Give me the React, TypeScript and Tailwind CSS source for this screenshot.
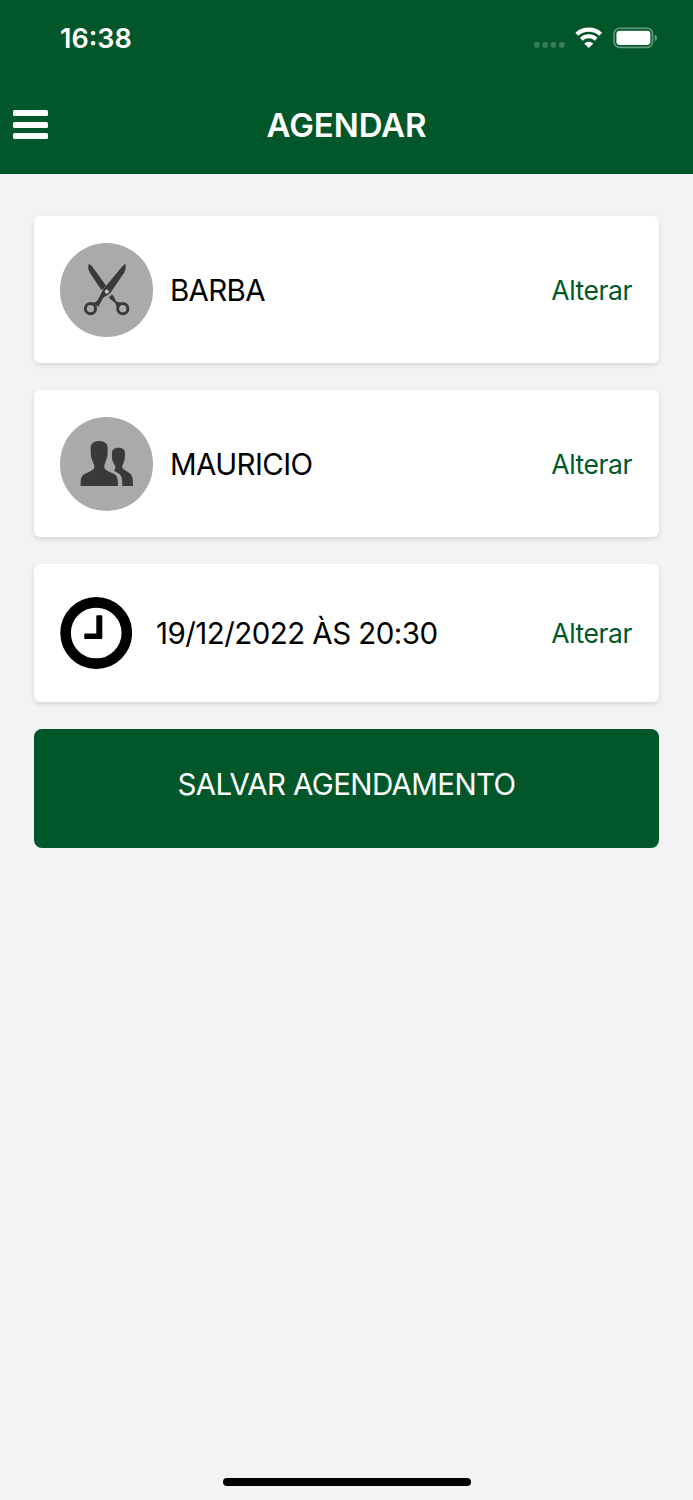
import React from 'react';

const ScissorsIcon = () => (
  <svg viewBox="0 0 93 94" className="h-full w-full" fill="#3a3a3a">
    <path d="M29 20.7C27.6 23.6 28 26.6 30 30L40 45Q41.4 47.4 43 46.2L46 42.6 32 23.2Z" />
    <path d="M65.2 20.8C66.2 23.6 65.8 26.4 64.2 29.4L51.4 48.4C49.8 51.8 44.6 52.4 42.8 55.6L38.2 64 33 59.6C36.2 59.2 37.4 57.8 38.6 55.2L43.8 45.6 62 23.8Z" />
    <path d="M48.7 54.5 51.9 51.4C54.8 53.2 54.8 57 57 58.8L60.6 59.6 56.4 64C56 61 54.6 59 52 57.6Z" />
    <circle cx="30.5" cy="65.7" r="5.1" fill="none" stroke="#3a3a3a" strokeWidth="3" />
    <circle cx="62.8" cy="65.7" r="5.1" fill="none" stroke="#3a3a3a" strokeWidth="3" />
    <circle cx="46.8" cy="48.6" r="2.1" fill="#c4c4c4" />
  </svg>
);

const PeopleIcon = () => (
  <svg viewBox="0 0 93 94" className="h-full w-full" fill="#3a3a3a">
    <path d="M39.2 24C44.9 24 47.7 26.8 47.7 31.5L47.5 36.4C47.8 38.6 46.9 41.4 46 43.4C45.5 45.4 44.9 47 44.3 48.2V50.4C44.5 53.2 51 55 54.6 57.2C57.6 59.4 58 62.5 58 69H20.6C20.6 62.5 21 59.4 24.2 57.2C27.8 55 34.1 53.2 34.3 50.4V48.2C33.6 47 33 45.4 32.4 43.4C31.4 41.4 30.5 38.6 30.8 36.4L30.6 31.5C30.6 26.8 33.5 24 39.2 24Z" />
    <path d="M58.4 30.7C62.9 30.7 65 32.8 65 36.4L64.8 40C65 42 64.4 43.8 63.7 45.2C63.3 46.8 62.8 48 62.2 48.8V50.6C62.8 52.8 68 54.6 70.8 57.2C72.7 59.4 73 63 73 69H62.2C62.2 64.5 62.2 61.4 60.8 58.8C59.4 56.4 57 55.2 53.6 53.8C55 53.2 55.4 52 55.2 50.6V48.8C54.4 48 53.7 46.8 53.2 45.2C52.4 43.8 51.8 42 52.1 40L51.9 36.4C51.9 32.8 54 30.7 58.4 30.7Z" />
  </svg>
);

const ClockIcon = () => (
  <svg viewBox="0 0 72 72" className="h-[72px] w-[72px] shrink-0">
    <circle cx="36.2" cy="36" r="30.6" fill="none" stroke="#000" strokeWidth="10.6" />
    <path
      d="M37.4 18.3H41.2Q42.3 18.3 42.3 19.4V41Q42.3 42.1 41.2 42.1H25.4Q24.3 42.1 24.3 41V37.5Q24.3 36.4 25.4 36.4H36.3V19.4Q36.3 18.3 37.4 18.3Z"
      fill="#000"
    />
  </svg>
);

const StatusBar = () => (
  <div className="flex h-[76px] items-center justify-between pr-9 pl-[60px]">
    <span className="text-[27px] leading-none font-semibold">16:38</span>
    <svg viewBox="0 0 124 24" className="h-6 w-[124px]">
      {/* Sinal */}
      <g fill="#fff" fillOpacity="0.22">
        <rect x="1" y="16" width="5.6" height="5.8" rx="1.8" />
        <rect x="9.4" y="16" width="5.6" height="5.8" rx="1.8" />
        <rect x="17.6" y="16" width="5.6" height="5.8" rx="1.8" />
        <rect x="26" y="16" width="5.6" height="5.8" rx="1.8" />
      </g>
      {/* Wi-Fi */}
      <g fill="none" stroke="#fff" strokeWidth="4.1">
        <path d="M43.8 8.2A18 18 0 0 1 67.7 8.2" />
        <path d="M48.3 13.2A11 11 0 0 1 63.2 13.2" />
      </g>
      <path d="M55.75 22 51.2 17.5A6.5 6.5 0 0 1 60.3 17.5Z" fill="#fff" />
      {/* Bateria */}
      <rect x="81" y="2.2" width="38.6" height="19.2" rx="5.6" fill="none" stroke="#fff" strokeOpacity="0.4" strokeWidth="1.6" />
      <rect x="83.4" y="4.8" width="34" height="14.2" rx="3.4" fill="#fff" />
      <path d="M121.8 8.8Q124 9.8 124 12Q124 14.2 121.8 15.2Z" fill="#fff" fillOpacity="0.45" />
    </svg>
  </div>
);

const Header = () => (
  <header className="h-[174px] bg-[#01572a] text-white">
    <StatusBar />
    <div className="grid h-[98px] grid-cols-[1fr_auto_1fr] items-center px-[13px]">
      <button aria-label="Menu" className="-mt-px flex w-[35px] flex-col gap-[5.5px]">
        <span className="h-[6px] rounded-[1.5px] bg-white" />
        <span className="h-[6px] rounded-[1.5px] bg-white" />
        <span className="h-[6px] rounded-[1.5px] bg-white" />
      </button>
      <h1 className="text-[33px] leading-none font-semibold tracking-[-0.1px]">AGENDAR</h1>
    </div>
  </header>
);

const Avatar = ({ children }: { children: React.ReactNode }) => (
  <div className="mr-[17px] h-[94px] w-[93px] shrink-0 overflow-hidden rounded-full bg-[#aaaaaa]">{children}</div>
);

interface CardProps {
  icon: React.ReactNode;
  label: string;
  className: string;
  labelClassName: string;
}

const Card = ({ icon, label, className, labelClassName }: CardProps) => (
  <div className={`flex items-center rounded-[6px] bg-white pr-[27px] pl-[26px] shadow-[0_2px_5px_rgba(0,0,0,0.13)] ${className}`}>
    {icon}
    <span className={`flex-1 pt-[2px] text-[29.5px] leading-none whitespace-nowrap text-black ${labelClassName}`}>{label}</span>
    <button className="pt-px text-[26.5px] leading-none tracking-[-0.45px] text-[#01572a]">Alterar</button>
  </div>
);

export default function App() {
  return (
    <div className="flex h-[1500px] w-[693px] flex-col bg-[#f3f3f3] font-['Inter',sans-serif]">
      <Header />
      <main className="flex flex-1 flex-col px-[34px] pt-[42px]">
        <Card
          icon={<Avatar><ScissorsIcon /></Avatar>}
          label="BARBA"
          className="mb-[27px] h-[147px]"
          labelClassName="tracking-[-0.7px]"
        />
        <Card
          icon={<Avatar><PeopleIcon /></Avatar>}
          label="MAURICIO"
          className="mb-[27px] h-[147px]"
          labelClassName="tracking-[-0.6px]"
        />
        <Card
          icon={<ClockIcon />}
          label="19/12/2022 ÀS 20:30"
          className="mb-[27px] h-[138px]"
          labelClassName="ml-6 tracking-[-0.55px]"
        />
        <button className="h-[119px] rounded-[8px] bg-[#01572a] pb-[8px] text-[29.5px] leading-none tracking-[-0.62px] text-white">
          SALVAR AGENDAMENTO
        </button>
      </main>
      <div className="mb-[14px] h-[8px] w-[248px] self-center rounded-full bg-black" />
    </div>
  );
}
